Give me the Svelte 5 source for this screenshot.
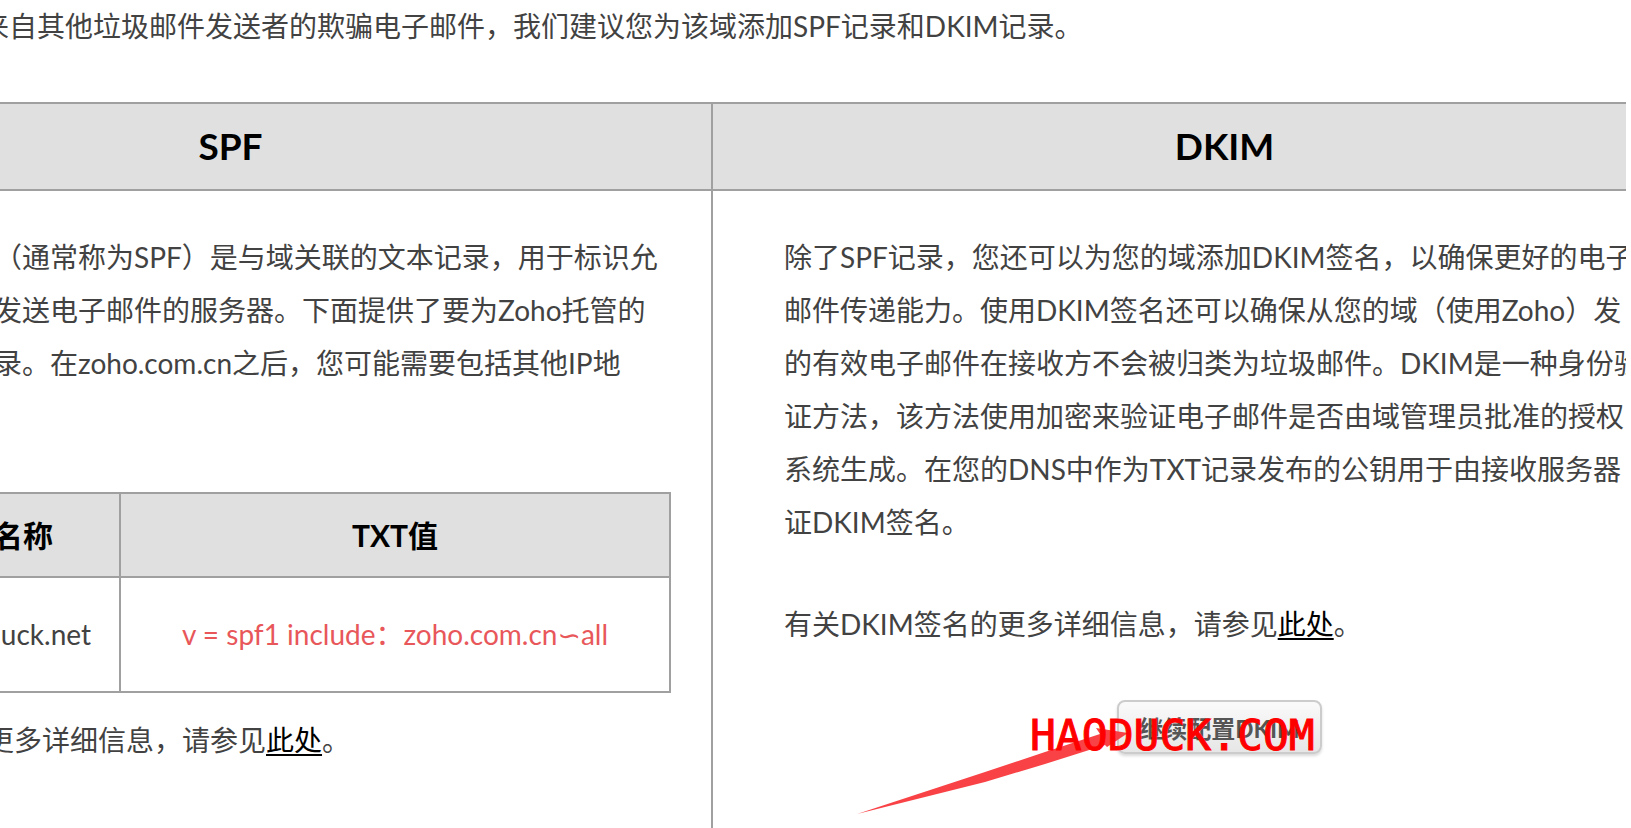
<script>
  const spfLines = [
    '（通常称为SPF）是与域关联的文本记录，用于标识允',
    '发送电子邮件的服务器。下面提供了要为Zoho托管的',
    '录。在zoho.com.cn之后，您可能需要包括其他IP地'
  ];

  const dkimLines = [
    '除了SPF记录，您还可以为您的域添加DKIM签名，以确保更好的电子',
    '邮件传递能力。使用DKIM签名还可以确保从您的域（使用Zoho）发',
    '的有效电子邮件在接收方不会被归类为垃圾邮件。DKIM是一种身份验',
    '证方法，该方法使用加密来验证电子邮件是否由域管理员批准的授权',
    '系统生成。在您的DNS中作为TXT记录发布的公钥用于由接收服务器',
    '证DKIM签名。'
  ];
</script>

<main class="page">
  <p class="intro">来自其他垃圾邮件发送者的欺骗电子邮件，我们建议您为该域添加SPF记录和DKIM记录。</p>

  <div class="columns">
    <section class="column spf">
      <h2>SPF</h2>
      <div class="content">
        <p class="bleed">
          {#each spfLines as line}<span class="line">{line}</span>{/each}
        </p>
        <table>
          <thead>
            <tr><th class="name">名称</th><th>TXT值</th></tr>
          </thead>
          <tbody>
            <tr><td class="name">duck.net</td><td class="value">v = spf1 include：zoho.com.cn<span class="tilde">∽</span>all</td></tr>
          </tbody>
        </table>
        <p class="more">更多详细信息，请参见<a href="#spf">此处</a>。</p>
      </div>
    </section>

    <section class="column dkim">
      <h2>DKIM</h2>
      <div class="content">
        <p>
          {#each dkimLines as line}<span class="line">{line}</span>{/each}
        </p>
        <p class="more">有关DKIM签名的更多详细信息，请参见<a href="#dkim">此处</a>。</p>
        <div class="action">
          <div class="anchor">
            <button type="button">继续配置DKIM</button>
            <svg class="arrow" width="272" height="92" viewBox="0 0 272 92" aria-hidden="true">
              <path d="M0 90 L128 48 L188 28 L243 10 L239 4 L271 9 L250 23 L248 21 L188 40 L128 58 Z" fill="#f9383c" />
            </svg>
            <span class="watermark">HAODUCK.COM</span>
          </div>
        </div>
      </div>
    </section>
  </div>
</main>

<style>
  :global(body) {
    background: #fff;
  }

  .page {
    display: flex;
    flex-direction: column;
    min-height: 100vh;
    padding-right: 5px;
    overflow: hidden;
    box-sizing: border-box;
    color: #424242;
    font-family: Lato, 'Noto Sans CJK SC', sans-serif;
    font-size: 28px;
    font-weight: 400;
    line-height: 53px;
    text-autospace: no-autospace;
    text-spacing-trim: space-all;
  }

  p {
    margin: 0;
    white-space: nowrap;
  }

  .intro {
    margin: 0 0 49px -19px;
  }

  .columns {
    flex: 1;
    display: grid;
    grid-template-columns: 713fr 913fr;
  }

  .column {
    min-width: 0;
    overflow: hidden;
    display: flex;
    flex-direction: column;
  }

  .spf {
    border-right: 2px solid #a0a0a0;
  }

  h2 {
    margin: 0;
    padding-bottom: 2px;
    border: solid #a0a0a0;
    border-width: 2px 0;
    background: #e0e0e0;
    color: #000;
    font-size: 37px;
    font-weight: 700;
    line-height: 83px;
    text-align: center;
  }

  .spf h2 {
    padding-right: 250px;
  }

  .dkim h2 {
    padding-left: 110px;
  }

  .content {
    padding-top: 40px;
  }

  .dkim .content {
    padding-left: 71px;
  }

  .line {
    display: block;
  }

  .bleed {
    margin-left: -6px;
  }

  table {
    width: calc(100% + 2px);
    margin: 102px 0 21px -42px;
    border-collapse: collapse;
    table-layout: fixed;
  }

  th,
  td {
    border: 2px solid #a0a0a0;
    padding: 0;
    text-align: center;
    white-space: nowrap;
  }

  th {
    height: 82px;
    background: #e0e0e0;
    color: #000;
    font-size: 30px;
    font-weight: 700;
  }

  td {
    height: 113px;
  }

  .name {
    width: 161px;
    box-sizing: border-box;
    text-align: right;
  }

  th.name {
    padding-right: 66px;
  }

  td.name {
    padding-right: 28px;
  }

  .value {
    color: #e8575a;
  }

  .tilde {
    font-family: 'DejaVu Sans', sans-serif;
  }

  a {
    color: #000;
    text-decoration-thickness: 2px;
    text-underline-offset: 3px;
  }

  .spf .more {
    margin-left: -14px;
  }

  .dkim .more {
    margin-top: 49px;
  }

  .action {
    display: flex;
    justify-content: center;
    margin: 49px 0 0 29px;
  }

  .anchor {
    position: relative;
    display: flex;
  }

  button {
    height: 54px;
    padding: 0 20px;
    border: 2px solid #ccc;
    border-radius: 8px;
    background: linear-gradient(#fafafa, #e6e6e6);
    box-shadow: 0 2px 3px rgba(0, 0, 0, 0.15);
    color: #555;
    font-family: inherit;
    font-size: 24px;
    font-weight: 700;
    white-space: nowrap;
  }

  .arrow {
    position: absolute;
    right: 193px;
    top: 24px;
    opacity: 0.95;
  }

  .watermark {
    position: absolute;
    right: 7px;
    top: 9px;
    color: #f00;
    font-family: 'DejaVu Sans Mono', monospace;
    font-size: 43px;
    font-weight: 400;
    -webkit-text-stroke: 1px #f00;
    white-space: nowrap;
  }
</style>
